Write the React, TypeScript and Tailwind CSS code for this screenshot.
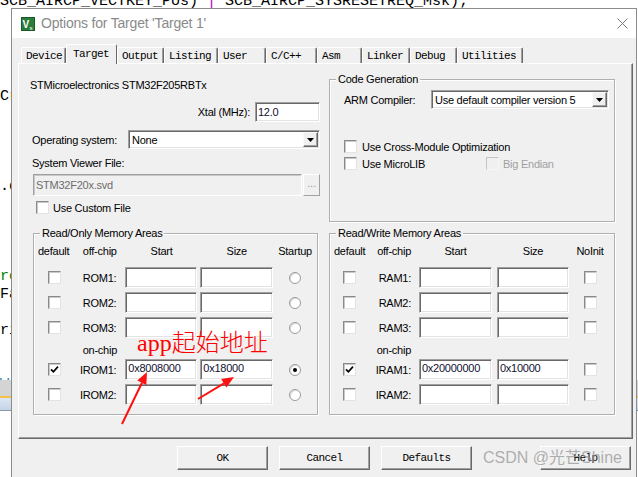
import React from "react";

function Check({ checked = false, disabled = false }: { checked?: boolean; disabled?: boolean }) {
  return (
    <span
      className={
        disabled
          ? "flex h-[13px] w-[13px] shrink-0 items-center justify-center border border-t-[#c4c4c4] border-l-[#c4c4c4] border-r-[#f6f6f6] border-b-[#f6f6f6] bg-[#f0f0f0]"
          : "flex h-[13px] w-[13px] shrink-0 items-center justify-center border border-t-[#8a8a8a] border-l-[#8a8a8a] border-r-[#e3e3e3] border-b-[#e3e3e3] bg-white shadow-[inset_1px_1px_0_#c8c8c8]"
      }
    >
      {checked && (
        <svg width="9" height="9" viewBox="0 0 9 9">
          <path d="M1 4.3 L3.4 6.8 L8 1.6" fill="none" stroke="#000" strokeWidth="1.7" />
        </svg>
      )}
    </span>
  );
}

function Radio({ on = false }: { on?: boolean }) {
  return (
    <span className="flex h-[12px] w-[12px] items-center justify-center rounded-full border border-[#9a9a9a] bg-white shadow-[inset_1px_1px_0_#dcdcdc]">
      {on && <span className="h-[4px] w-[4px] rounded-full bg-black" />}
    </span>
  );
}

function Box({ value = "", className = "" }: { value?: string; className?: string }) {
  return (
    <div
      className={
        "shrink-0 overflow-hidden whitespace-nowrap border border-t-[#a0a0a0] border-l-[#a0a0a0] border-r-white border-b-white bg-white pl-[2px] pt-[1px] leading-[14px] text-[#101030] shadow-[inset_1px_1px_0_#696969,inset_-1px_-1px_0_#e3e3e3] " +
        className
      }
    >
      {value}
    </div>
  );
}

function Combo({ value, className = "" }: { value: string; className?: string }) {
  return (
    <div
      className={
        "flex shrink-0 items-center border border-t-[#a0a0a0] border-l-[#a0a0a0] border-r-white border-b-white bg-white pl-[3px] shadow-[inset_1px_1px_0_#696969,inset_-1px_-1px_0_#e3e3e3] " +
        className
      }
    >
      <span className="flex-1 whitespace-nowrap leading-[14px]">{value}</span>
      <span className="mr-[1px] flex h-[15px] w-[15px] items-center justify-center border border-t-[#fafafa] border-l-[#fafafa] border-r-[#696969] border-b-[#696969] bg-[#f0f0f0] shadow-[inset_-1px_-1px_0_#a0a0a0]">
        <svg width="7" height="4" viewBox="0 0 7 4">
          <path d="M0 0 H7 L3.5 4 Z" fill="#000" />
        </svg>
      </span>
    </div>
  );
}

function Group({ title, className = "", children }: { title: string; className?: string; children?: React.ReactNode }) {
  return (
    <div className={"relative shrink-0 border border-[#b0b0b0] shadow-[inset_1px_1px_0_#fff,1px_1px_0_#fff] " + className}>
      <span className="absolute left-[6px] top-[-8px] whitespace-nowrap bg-[#f0f0f0] px-[2px] leading-[14px]">{title}</span>
      {children}
    </div>
  );
}

const tabs: { name: string; cls: string; sel?: boolean }[] = [
  { name: "Device", cls: "w-[45px]" },
  { name: "Target", cls: "w-[51px]", sel: true },
  { name: "Output", cls: "w-[47px]" },
  { name: "Listing", cls: "w-[54px]" },
  { name: "User", cls: "w-[48px]" },
  { name: "C/C++", cls: "w-[51px]" },
  { name: "Asm", cls: "w-[45px]" },
  { name: "Linker", cls: "w-[48px]" },
  { name: "Debug", cls: "w-[47px]" },
  { name: "Utilities", cls: "w-[66px]" },
];

const romRows = [
  { label: "ROM1:", start: "", size: "", def: false, on: false },
  { label: "ROM2:", start: "", size: "", def: false, on: false },
  { label: "ROM3:", start: "", size: "", def: false, on: false },
];
const iromRows = [
  { label: "IROM1:", start: "0x8008000", size: "0x18000", def: true, on: true },
  { label: "IROM2:", start: "", size: "", def: false, on: false },
];
const ramRows = [
  { label: "RAM1:", start: "", size: "", def: false },
  { label: "RAM2:", start: "", size: "", def: false },
  { label: "RAM3:", start: "", size: "", def: false },
];
const iramRows = [
  { label: "IRAM1:", start: "0x20000000", size: "0x10000", def: true },
  { label: "IRAM2:", start: "", size: "", def: false },
];

function RomRow({ r }: { r: { label: string; start: string; size: string; def: boolean; on: boolean } }) {
  return (
    <div className="flex h-[25px] items-center">
      <span className="flex w-[33px] justify-center">
        <Check checked={r.def} />
      </span>
      <span className="w-[46px] text-right leading-[14px]">{r.label}</span>
      <Box value={r.start} className="ml-[9px] h-[21px] w-[72px]" />
      <Box value={r.size} className="ml-[3px] h-[21px] w-[73px]" />
      <span className="flex w-[44px] justify-center">
        <Radio on={r.on} />
      </span>
    </div>
  );
}

function RamRow({ r }: { r: { label: string; start: string; size: string; def: boolean } }) {
  return (
    <div className="flex h-[25px] items-center">
      <span className="flex w-[30px] justify-center">
        <Check checked={r.def} />
      </span>
      <span className="w-[47px] text-right leading-[14px]">{r.label}</span>
      <Box value={r.start} className="ml-[8px] h-[21px] w-[73px]" />
      <Box value={r.size} className="ml-[5px] h-[21px] w-[72px]" />
      <span className="flex w-[42px] justify-center">
        <Check />
      </span>
    </div>
  );
}

function WinButton({ label, className = "" }: { label: string; className?: string }) {
  return (
    <div
      className={
        "flex h-[24px] w-[91px] shrink-0 items-center justify-center border border-t-white border-l-white border-r-[#696969] border-b-[#696969] bg-[#f0f0f0] shadow-[inset_-1px_-1px_0_#a0a0a0] font-['Liberation_Mono','Courier_New',monospace] text-[11px] tracking-[-0.6px] " +
        className
      }
    >
      {label}
    </div>
  );
}

export default function App() {
  return (
    <div className="relative h-[477px] w-[638px] overflow-hidden bg-white">
      {/* editor behind the dialog */}
      <div className="absolute left-0 top-[-7px] whitespace-pre font-['Liberation_Mono','Courier_New',monospace] text-[15px] leading-[18px] text-black">
        SCB_AIRCP_VECTKEY_Pos) <span className="text-[#c000c0]">|</span> SCB_AIRCP_SYSRESETREQ_Msk);
      </div>
      <div className="absolute left-0 top-[88px] flex flex-col whitespace-pre font-['Liberation_Mono','Courier_New',monospace] text-[15px] leading-[18px] text-black">
        <span>Cr</span>
        <span> </span>
        <span> </span>
        <span> </span>
        <span> </span>
        <span>.d</span>
        <span> </span>
        <span> </span>
        <span> </span>
        <span> </span>
        <span className="text-[#008000]">ro</span>
        <span>Fa</span>
        <span> </span>
        <span>ri</span>
        <span> </span>
        <span> </span>
        <span className="text-[#2a8aa8]">W</span>
      </div>
      <div className="absolute left-0 top-[380px] flex w-full flex-col">
        <div className="h-[16px] bg-[#d4d4d4]" />
        <div className="h-[2px] bg-[#f2c24a]" />
        <div className="h-[12px] bg-gradient-to-b from-[#dce6f2] to-[#c4d4e6]" />
        <div className="h-[1px] bg-[#8898aa]" />
      </div>

      {/* dialog window */}
      <div className="absolute left-[11px] top-[8px] flex h-[470px] w-[626px] flex-col border border-[#8c8c8c] bg-[#f0f0f0] font-['Liberation_Sans',Arial,sans-serif] text-[11px] tracking-[-0.25px] text-black">
        {/* title bar */}
        <div className="flex h-[29px] shrink-0 items-center bg-white pl-[9px]">
          <svg width="14" height="14" viewBox="0 0 14 14" className="shrink-0">
            <rect x="0" y="0" width="14" height="14" fill="#2a7d3a" />
            <rect x="0.5" y="0.5" width="13" height="13" fill="none" stroke="#1b5a27" />
            <text x="1.5" y="10.5" fontSize="10" fontWeight="bold" fill="#fff" fontFamily="Liberation Sans, Arial, sans-serif">V</text>
            <text x="8.5" y="12.5" fontSize="6" fill="#fff" fontFamily="Liberation Sans, Arial, sans-serif">s</text>
          </svg>
          <span className="ml-[6px] text-[14px] tracking-[-0.2px] text-[#8a8a8a]">Options for Target 'Target 1'</span>
          <svg width="11" height="11" viewBox="0 0 11 11" className="ml-auto mr-[8px]">
            <path d="M0.5 0.5 L10.5 10.5 M10.5 0.5 L0.5 10.5" stroke="#7a7a7a" strokeWidth="1" />
          </svg>
        </div>

        {/* body */}
        <div className="flex flex-1 flex-col px-[6px] pt-[6px]">
          {/* tabs */}
          <div className="flex h-[19px] items-end pl-[3px]">
            {tabs.map((t) =>
              t.sel ? (
                <div
                  key={t.name}
                  className={
                    "relative z-10 mb-[-1px] flex h-[20px] items-start rounded-t-[2px] border-l border-t border-r border-l-white border-t-white border-r-[#696969] bg-[#f0f0f0] pl-[6px] pt-[1px] font-['Liberation_Mono','Courier_New',monospace] text-[11px] leading-[16px] tracking-[-0.6px] " +
                    t.cls
                  }
                >
                  {t.name}
                </div>
              ) : (
                <div
                  key={t.name}
                  className={
                    "flex h-[16px] items-center rounded-t-[2px] border-l border-t border-r border-l-white border-t-white border-r-[#696969] bg-[#f0f0f0] pl-[4px] font-['Liberation_Mono','Courier_New',monospace] text-[11px] leading-[14px] tracking-[-0.6px] shadow-[inset_-1px_0_0_#a0a0a0] " +
                    t.cls
                  }
                >
                  {t.name}
                </div>
              )
            )}
          </div>

          {/* tab panel */}
          <div className="flex h-[376px] w-[615px] shrink-0 border border-t-white border-l-white border-r-[#696969] border-b-[#696969] pl-[11px] shadow-[inset_-1px_-1px_0_#a0a0a0]">
            {/* left column */}
            <div className="flex w-[290px] shrink-0 flex-col">
              <div className="pt-[14px] leading-[14px]">STMicroelectronics STM32F205RBTx</div>
              <div className="mt-[10px] flex h-[20px] items-center justify-end">
                <span className="leading-[14px]">Xtal (MHz):</span>
                <Box value="12.0" className="ml-[5px] h-[20px] w-[65px] pt-[2px]" />
              </div>
              <div className="mt-[8px] flex h-[19px] items-center pl-[2px]">
                <span className="leading-[14px]">Operating system:</span>
                <Combo value="None" className="ml-auto h-[19px] w-[192px]" />
              </div>
              <div className="mt-[7px] pl-[2px] leading-[14px]">System Viewer File:</div>
              <div className="mt-[4px] flex h-[22px] pl-[3px]">
                <div className="flex h-[22px] w-[269px] items-center border border-t-[#a0a0a0] border-l-[#a0a0a0] border-r-white border-b-white bg-[#f0f0f0] pl-[2px] leading-[14px] text-[#6d6d6d] shadow-[inset_1px_1px_0_#c8c8c8]">
                  STM32F20x.svd
                </div>
                <div className="ml-[1px] flex h-[22px] w-[17px] items-center justify-center border border-t-white border-l-white border-r-[#a0a0a0] border-b-[#a0a0a0] bg-[#f0f0f0] pb-[3px] text-[#9a9a9a]">
                  ...
                </div>
              </div>
              <div className="mt-[5px] flex h-[13px] items-center pl-[6px]">
                <Check />
                <span className="ml-[4px] leading-[14px]">Use Custom File</span>
              </div>

              <Group title="Read/Only Memory Areas" className="ml-[3px] mt-[19px] h-[182px] w-[285px] pl-[4px] pt-[10px]">
                <div className="flex h-[14px] items-center leading-[14px]">
                  <span className="w-[33px] whitespace-nowrap">default</span>
                  <span className="w-[46px] whitespace-nowrap text-right">off-chip</span>
                  <span className="ml-[9px] w-[72px] text-center">Start</span>
                  <span className="ml-[3px] w-[73px] text-center">Size</span>
                  <span className="w-[44px] text-center">Startup</span>
                </div>
                <div className="mt-[7px] flex flex-col">
                  {romRows.map((r) => (
                    <RomRow key={r.label} r={r} />
                  ))}
                  <div className="mt-[3px] flex h-[14px] items-center leading-[14px]">
                    <span className="w-[33px]" />
                    <span className="w-[46px] text-right">on-chip</span>
                  </div>
                  {iromRows.map((r) => (
                    <RomRow key={r.label} r={r} />
                  ))}
                </div>
              </Group>
            </div>

            {/* right column */}
            <div className="ml-[9px] flex w-[286px] shrink-0 flex-col">
              <Group title="Code Generation" className="mt-[15px] h-[143px] w-[286px] pt-[10px]">
                <div className="flex h-[19px] items-center pl-[14px]">
                  <span className="w-[87px] leading-[14px]">ARM Compiler:</span>
                  <Combo value="Use default compiler version 5" className="h-[19px] w-[178px]" />
                </div>
                <div className="mt-[31px] flex h-[13px] items-center pl-[14px]">
                  <Check />
                  <span className="ml-[5px] leading-[14px]">Use Cross-Module Optimization</span>
                </div>
                <div className="mt-[4px] flex h-[13px] items-center pl-[14px]">
                  <Check />
                  <span className="ml-[5px] w-[124px] leading-[14px]">Use MicroLIB</span>
                  <Check disabled />
                  <span className="ml-[4px] leading-[14px] text-[#a0a0a0]">Big Endian</span>
                </div>
              </Group>

              <Group title="Read/Write Memory Areas" className="mt-[11px] h-[182px] w-[286px] pl-[4px] pt-[10px]">
                <div className="flex h-[14px] items-center leading-[14px]">
                  <span className="w-[30px] whitespace-nowrap">default</span>
                  <span className="w-[47px] whitespace-nowrap text-right">off-chip</span>
                  <span className="ml-[8px] w-[73px] text-center">Start</span>
                  <span className="ml-[5px] w-[72px] text-center">Size</span>
                  <span className="w-[42px] text-center">NoInit</span>
                </div>
                <div className="mt-[7px] flex flex-col">
                  {ramRows.map((r) => (
                    <RamRow key={r.label} r={r} />
                  ))}
                  <div className="mt-[3px] flex h-[14px] items-center leading-[14px]">
                    <span className="w-[30px]" />
                    <span className="w-[47px] text-right">on-chip</span>
                  </div>
                  {iramRows.map((r) => (
                    <RamRow key={r.label} r={r} />
                  ))}
                </div>
              </Group>
            </div>
          </div>

          {/* buttons */}
          <div className="mt-[7px] flex pl-[159px]">
            <WinButton label="OK" />
            <WinButton label="Cancel" className="ml-[11px]" />
            <WinButton label="Defaults" className="ml-[11px]" />
            <WinButton label="Help" className="ml-[68px]" />
          </div>
        </div>
      </div>

      {/* annotation */}
      <div className="absolute left-[137px] top-[331px] whitespace-nowrap font-['Liberation_Serif','Noto_Sans_CJK_SC',serif] text-[24px] font-light leading-[24px] text-[#ff0000]">
        app起始地址
      </div>
      <svg className="pointer-events-none absolute left-0 top-0" width="638" height="477" viewBox="0 0 638 477">
        <line x1="122" y1="424" x2="142" y2="382.8" stroke="#ff1010" strokeWidth="2" />
        <polygon points="147,372 146.3,385 137.3,380.6" fill="#ff1010" />
        <line x1="198" y1="399" x2="224" y2="383.3" stroke="#ff1010" strokeWidth="2" />
        <polygon points="234,377 226.4,387.6 221.2,379" fill="#ff1010" />
      </svg>

      {/* watermark */}
      <div className="absolute left-[483px] top-[448px] whitespace-nowrap font-['Liberation_Sans','Noto_Sans_CJK_SC',sans-serif] text-[16px] leading-[20px] text-[rgba(150,150,150,0.75)]">
        CSDN @光芒Shine
      </div>
    </div>
  );
}
